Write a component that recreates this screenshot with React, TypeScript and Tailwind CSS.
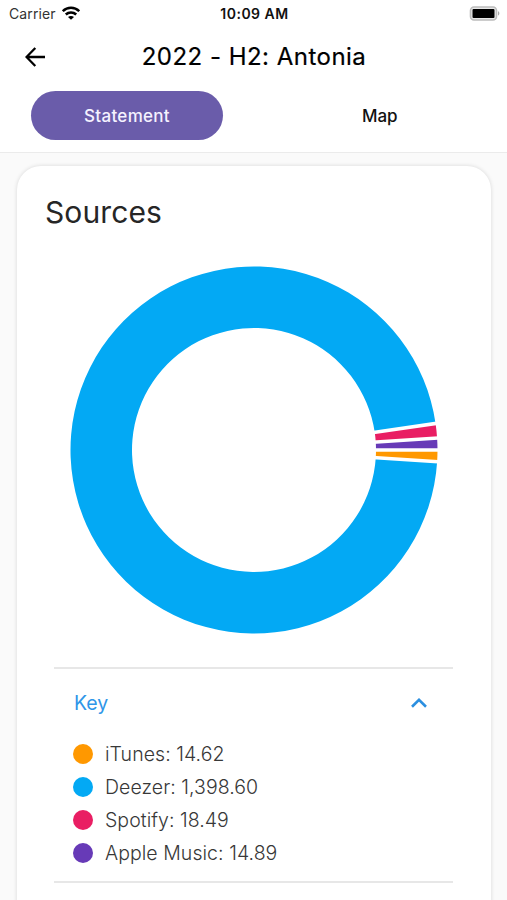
const sources = [
  { name: "iTunes", value: 14.62, label: "14.62", fill: "#ff9800" },
  { name: "Deezer", value: 1398.6, label: "1,398.60", fill: "#03a9f4" },
  { name: "Spotify", value: 18.49, label: "18.49", fill: "#e91e63" },
  { name: "Apple Music", value: 14.89, label: "14.89", fill: "#673ab7" },
];

const OUTER = 183.5;
const INNER = 122;

function point(radius: number, angle: number) {
  return `${(184 + radius * Math.cos(angle)).toFixed(3)} ${(184 + radius * Math.sin(angle)).toFixed(3)}`;
}

function Donut() {
  const total = sources.reduce((sum, s) => sum + s.value, 0);
  let angle = 0;
  const slices = sources.map((s) => {
    const start = angle;
    const end = start + (s.value / total) * Math.PI * 2;
    angle = end;
    const large = end - start > Math.PI ? 1 : 0;
    return {
      fill: s.fill,
      start,
      d: `M${point(OUTER, start)}A${OUTER} ${OUTER} 0 ${large} 1 ${point(OUTER, end)}L${point(INNER, end)}A${INNER} ${INNER} 0 ${large} 0 ${point(INNER, start)}Z`,
    };
  });
  return (
    <svg width="368" height="368" viewBox="0 0 368 368" className="mx-auto block">
      {slices.map((s) => (
        <path key={s.fill} d={s.d} fill={s.fill} />
      ))}
      {slices.map((s) => (
        <path key={s.fill} d={`M${point(INNER - 3, s.start)}L${point(OUTER + 3, s.start)}`} stroke="#fff" strokeWidth="3.5" />
      ))}
    </svg>
  );
}

function StatusBar() {
  return (
    <div className="grid h-7 grid-cols-3 items-center pl-[9px] pr-[7px]">
      <div className="flex items-center gap-[6px]">
        <span className="text-[14px] leading-5 tracking-[0.1px] text-[#333]">Carrier</span>
        <svg width="18" height="14" viewBox="0 0 18 14" fill="none" stroke="#000" strokeWidth="2.5" className="-mt-[2px]">
          <path d="M.8 5.2C5.4.6 12.6.6 17.2 5.2" />
          <path d="M3.8 8.5c2.9-2.8 7.5-2.8 10.4 0" />
          <path d="M9 13.8 6 11c1.7-1.5 4.3-1.5 6 0Z" fill="#000" stroke="none" />
        </svg>
      </div>
      <span className="text-center text-[14px] font-semibold leading-5 tracking-[0.5px] text-[#111]">10:09 AM</span>
      <svg width="31" height="15" viewBox="0 0 31 15" className="-mt-[2px] justify-self-end">
        <rect x="1.5" y="1" width="26" height="13" rx="3.5" fill="#e8e8e8" stroke="#bcbcbc" strokeWidth="1.6" />
        <rect x="3.5" y="3" width="22" height="9" rx="1" fill="#000" />
        <path d="M29 5.2c1.8.5 1.8 3.8 0 4.3Z" fill="#aaa" />
      </svg>
    </div>
  );
}

export default function App() {
  return (
    <div className="flex h-[900px] w-[507px] flex-col overflow-hidden bg-[#fafafa] font-['Inter',sans-serif]">
      <header className="h-[153px] shrink-0 border-b border-[#ebebeb] bg-white">
        <StatusBar />
        <div className="grid h-[58px] grid-cols-[71px_1fr_71px] items-center">
          <svg width="20" height="20" viewBox="0 0 20 20" fill="none" stroke="#000" strokeWidth="2.3" className="ml-[25px]">
            <path d="M20 10H2M10.3 1 1.5 10l8.8 9" />
          </svg>
          <h1 className="whitespace-nowrap pl-[1px] text-center text-[24px] font-normal leading-8 tracking-[0.48px] text-black [-webkit-text-stroke:0.2px_black]">2022 - H2: Antonia</h1>
        </div>
        <div className="mx-[31px] mt-[5px] grid grid-cols-2 text-[17px] font-medium">
          <button className="h-[49px] w-[192px] rounded-full bg-[#6a5caa] pt-[2px] tracking-[0.3px] text-[#f5f2ff]">Statement</button>
          <button className="h-[49px] pl-[30px] pt-[2px] text-[#111]">Map</button>
        </div>
      </header>
      <main className="mx-[16.5px] mt-[13px] h-[780px] shrink-0 rounded-[24px] bg-white shadow-[0_0_4px_rgba(0,0,0,0.14)]">
        <h2 className="pl-[28.5px] pt-[26px] text-[30px] font-normal leading-10 tracking-[0.1px] text-[#262626]">Sources</h2>
        <div className="mt-[34px]">
          <Donut />
        </div>
        <section className="mx-[37.5px] mt-[33px] h-[216px] border-y-2 border-[#e7e7e7]">
          <div className="flex h-[68px] items-center justify-between pl-[20px] pr-[26px]">
            <span className="pt-[2px] text-[19.5px] text-[#2f96e8]">Key</span>
            <svg width="16" height="10" viewBox="0 0 16 10" fill="none" stroke="#2b8fe0" strokeWidth="2.6">
              <path d="M1 8.7 8 1.8l7 6.9" />
            </svg>
          </div>
          <ul>
            {sources.map((s) => (
              <li key={s.name} className="flex h-[33px] items-center gap-[12px] pl-[19px] text-[19.5px] font-light tracking-[0.05px] text-[#383838]">
                <span className="size-5 rounded-full" style={{ backgroundColor: s.fill }} />
                <span className="pt-[2px]">{s.name}: {s.label}</span>
              </li>
            ))}
          </ul>
        </section>
      </main>
    </div>
  );
}
